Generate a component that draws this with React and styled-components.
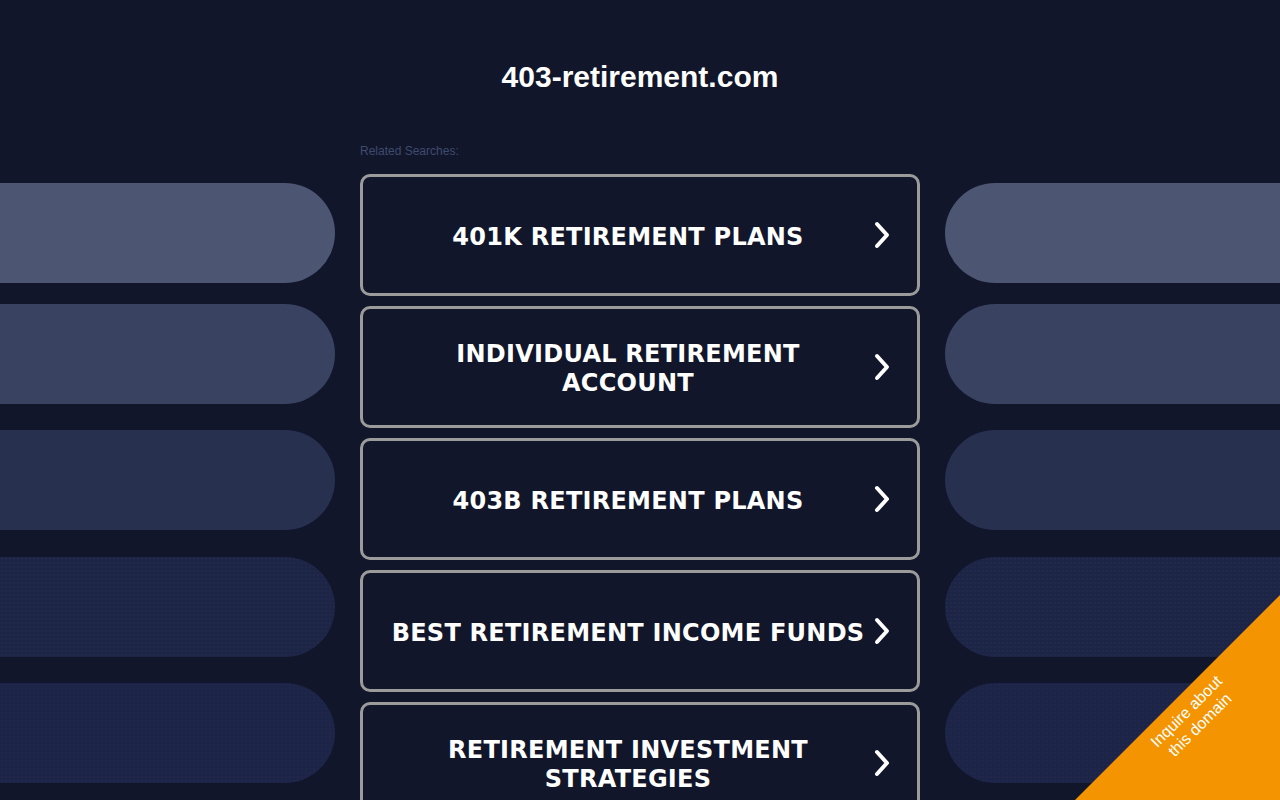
import React from 'react';
import styled, { createGlobalStyle } from 'styled-components';

const GlobalStyle = createGlobalStyle`
  html, body {
    margin: 0;
    padding: 0;
    height: 100%;
    overflow: hidden;
    background: #11162b;
  }
  * { box-sizing: border-box; }
`;

const Page = styled.div`
  display: grid;
  grid-template-columns: 335px 560px 335px;
  column-gap: 25px;
  width: 1280px;
  height: 800px;
  background: #11162b;
`;

const PillColumn = styled.div`
  display: flex;
  flex-direction: column;
`;

const Pill = styled.div`
  height: 100px;
  margin-top: ${(p) => p.$mt}px;
  background-color: ${(p) => p.$color};
  background-image: ${(p) =>
    p.$dotted
      ? 'radial-gradient(rgba(255,255,255,0.035) 0.6px, transparent 0.8px)'
      : 'none'};
  background-size: 4px 4px;
  border-radius: ${(p) => (p.$side === 'left' ? '0 50px 50px 0' : '50px 0 0 50px')};
`;

const Center = styled.main`
  display: flex;
  flex-direction: column;
`;

const Title = styled.h1`
  margin: 60px 0 0;
  font-family: 'Liberation Sans', Arial, sans-serif;
  font-weight: 700;
  font-size: 30px;
  line-height: 34px;
  color: #ffffff;
  text-align: center;
`;

const Label = styled.div`
  margin-top: 50px;
  font-family: 'Liberation Sans', Arial, sans-serif;
  font-size: 12px;
  line-height: 14px;
  color: #3f4b6d;
`;

const List = styled.div`
  margin-top: 16px;
  display: flex;
  flex-direction: column;
  gap: 10px;
`;

const SearchLink = styled.a`
  display: flex;
  align-items: center;
  gap: 8px;
  height: 122px;
  flex-shrink: 0;
  padding: 0 27px;
  border: 3px solid #9b9b9b;
  border-radius: 10px;
  background: #11162b;
  color: #ffffff;
  text-decoration: none;
  cursor: pointer;
`;

const LinkText = styled.span`
  flex: 1;
  padding-top: 4px;
  text-align: center;
  font-family: 'DejaVu Sans', Verdana, sans-serif;
  font-weight: 700;
  font-size: 24px;
  line-height: 29px;
  letter-spacing: 0.25px;
  text-transform: uppercase;
`;

const Chevron = styled.svg`
  width: 16px;
  height: 28px;
  flex-shrink: 0;
`;

const Corner = styled.a`
  position: fixed;
  right: 0;
  bottom: 0;
  width: 205px;
  height: 205px;
  background: #f39400;
  clip-path: polygon(100% 0, 100% 100%, 0 100%);
  color: #ffffff;
  text-decoration: none;
`;

const CornerText = styled.span`
  position: absolute;
  left: 118px;
  top: 123px;
  transform: translate(-50%, -50%) rotate(-45deg);
  font-family: 'Liberation Sans', Arial, sans-serif;
  font-size: 16px;
  line-height: 19px;
  text-align: center;
  white-space: nowrap;
`;

const pills = [
  { mt: 183, color: '#4c5673' },
  { mt: 21, color: '#3a4262' },
  { mt: 26, color: '#283050' },
  { mt: 27, color: '#1d2546', dotted: true },
  { mt: 26, color: '#1c2447', dotted: true },
];

const searches = [
  '401k Retirement Plans',
  'Individual Retirement Account',
  '403b Retirement Plans',
  'Best Retirement Income Funds',
  'Retirement Investment Strategies',
];

const Pills = ({ side }) => (
  <PillColumn>
    {pills.map((p, i) => (
      <Pill key={i} $mt={p.mt} $color={p.color} $dotted={p.dotted} $side={side} />
    ))}
  </PillColumn>
);

const App = () => (
  <>
    <GlobalStyle />
    <Page>
      <Pills side="left" />
      <Center>
        <Title>403-retirement.com</Title>
        <Label>Related Searches:</Label>
        <List>
          {searches.map((s) => (
            <SearchLink key={s}>
              <LinkText>{s}</LinkText>
              <Chevron viewBox="0 0 16 28">
                <polyline
                  points="3,3 13,14 3,25"
                  fill="none"
                  stroke="#ffffff"
                  strokeWidth="4"
                  strokeLinecap="round"
                  strokeLinejoin="round"
                />
              </Chevron>
            </SearchLink>
          ))}
        </List>
      </Center>
      <Pills side="right" />
    </Page>
    <Corner>
      <CornerText>
        Inquire about
        <br />
        this domain
      </CornerText>
    </Corner>
  </>
);

export default App;
